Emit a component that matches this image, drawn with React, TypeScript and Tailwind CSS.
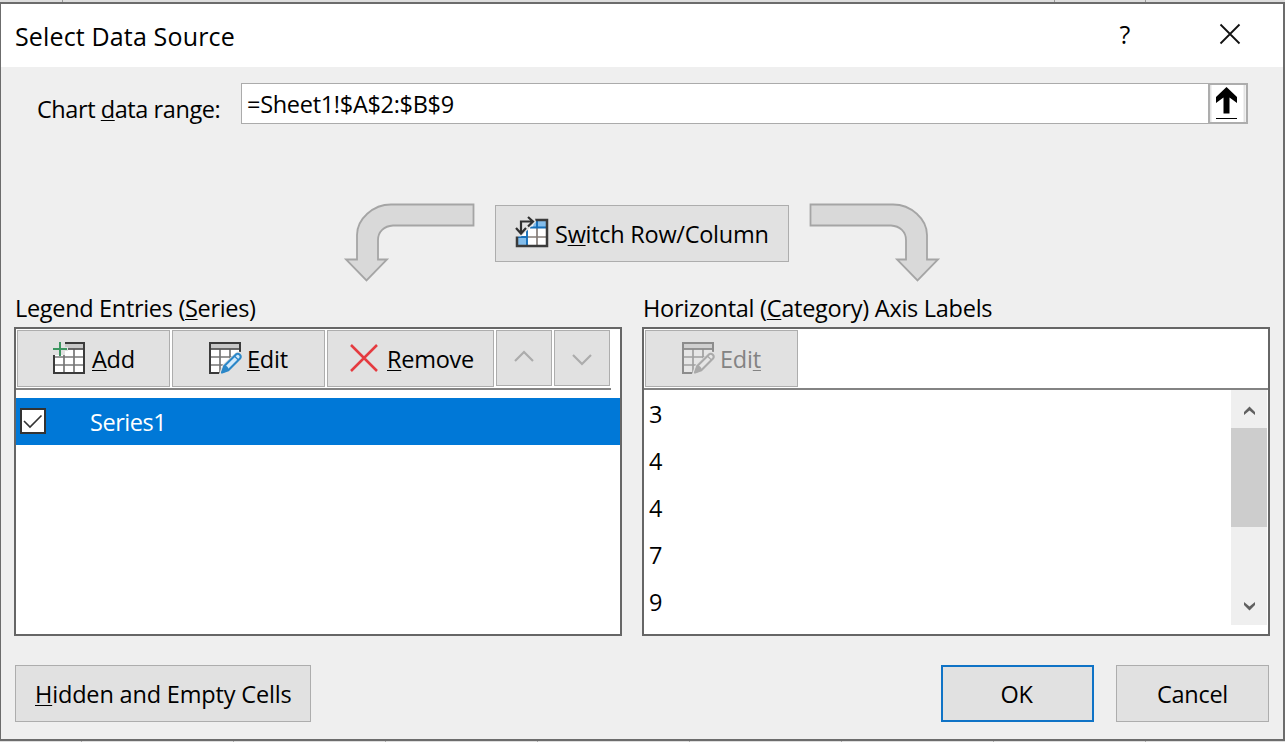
import type { ReactNode } from "react";

const items = ["3", "4", "4", "7", "9"];

function U({ children }: { children: ReactNode }) {
  return (
    <span className="underline decoration-1 underline-offset-[1.5px] [text-decoration-skip-ink:none]">
      {children}
    </span>
  );
}

function TableIcon({ variant }: { variant: "add" | "edit" | "disabled" }) {
  const off = variant === "disabled";
  const dark = off ? "#8c8c8c" : "#3b3b3b";
  const mid = off ? "#a0a0a0" : "#777777";
  return (
    <svg className="mb-px h-[34px] w-[34px] shrink-0" viewBox="0 0 34 34" fill="none">
      <rect x="2" y="2" width="30" height="30" fill={off ? "#e6e6e6" : "#fff"} />
      <rect x="2" y="2" width="30" height="6" fill={off ? "#d0d0d0" : "#c8c8c8"} />
      <path d="M1 16H32M1 24H32M12 8V32M22 8V32" stroke={mid} strokeWidth="1.7" />
      <path d="M1 8H32" stroke={off ? "#8c8c8c" : "#5a5a5a"} strokeWidth="1.8" />
      <rect x="2" y="2" width="30" height="30" stroke={dark} strokeWidth="2" />
      {variant === "add" ? (
        <>
          <path d="M0 0H13V6H16V10H13V14H0Z" fill="#e1e1e1" />
          <path d="M1 8H15M8 1V15" stroke="#3c9660" strokeWidth="2" />
        </>
      ) : (
        <>
          <path d="M33.5 11L29 10.5L15 23L10.5 34H34V11Z" fill="#e1e1e1" />
          <path
            d="M14 31.5L16.3 25L28 13.4Q30 12 31.8 13.8Q33.5 15.6 32 17.5L20.3 29.2Z"
            fill={off ? "#e6e6e6" : "#d5eafa"}
            stroke={off ? "#aaaaaa" : "#2b87c8"}
            strokeWidth="2.1"
            strokeLinejoin="round"
          />
          <path
            d="M16.3 25Q19.5 25.5 20.3 29.2L14 31.5ZM26.3 15L30.5 19"
            fill={off ? "#aaaaaa" : "#2b87c8"}
            stroke={off ? "#aaaaaa" : "#2b87c8"}
            strokeWidth="1.3"
          />
        </>
      )}
    </svg>
  );
}

function SwitchIcon() {
  return (
    <svg className="mb-[3px] h-[34px] w-[34px] shrink-0" viewBox="0 0 34 34" fill="none">
      <rect x="2" y="5" width="30" height="26" fill="#fff" />
      <path d="M19 5H32V12H18Z" fill="#83bdeb" />
      <path d="M2 21H12V31H2Z" fill="#83bdeb" />
      <path d="M12 22H32M22 12V31" stroke="#857d78" strokeWidth="1.7" />
      <path d="M15 12.5H31M12 15V30M22 5V13M3 22H12" stroke="#176fb8" strokeWidth="1.9" />
      <path d="M2 19V31H32V5H19" stroke="#3b3b3b" strokeWidth="2.5" />
      <path d="M0 0H19L21 7L6 21.5H0Z" fill="#e1e1e1" />
      <path d="M6 18V6.5H18M13 2L18 6.5L13 11.5M1 13L6 18.5L11 13" stroke="#303030" strokeWidth="2.2" />
    </svg>
  );
}

function BentArrow({ flip = false }: { flip?: boolean }) {
  return (
    <svg
      className={flip ? "h-[80px] w-[132px] shrink-0 -scale-x-100" : "h-[80px] w-[132px] shrink-0"}
      viewBox="0 0 132 80"
    >
      <path
        d="M130.5 2.5H48C30 2.5 14 17 14 33V57.5H3L23.5 78.5L44 57.5H35V38C35 30 41 24 50 23.5H130.5Z"
        fill="#d9d9d9"
        stroke="#a5a5a5"
        strokeWidth="1.8"
      />
    </svg>
  );
}

function Chevron({ down = false }: { down?: boolean }) {
  return (
    <svg className="h-[13px] w-[22px]" viewBox="0 0 22 13" fill="none">
      <path d={down ? "M2 2L11 11L20 2" : "M2 11L11 2L20 11"} stroke="#acacac" strokeWidth="2.2" />
    </svg>
  );
}

function ScrollChevron({ down = false }: { down?: boolean }) {
  return (
    <svg className="h-[10px] w-[13px]" viewBox="0 0 13 10">
      <path
        d={down ? "M1 1L6.5 5.5L12 1V4L6.5 9.5L1 4Z" : "M1 9L6.5 4.5L12 9V6L6.5 .5L1 6Z"}
        fill="#606060"
      />
    </svg>
  );
}

const btn = "flex h-[57px] shrink-0 items-center border border-[#adadad] bg-[#e1e1e1] whitespace-nowrap";

export default function App() {
  return (
    <div className="flex h-[742px] w-[1285px] flex-col overflow-hidden bg-[#dedede] font-['Open_Sans','Noto_Sans',sans-serif] text-[23.5px] leading-8 text-black">
      <div className="flex h-[2px] shrink-0">
        <div className="w-[63px] border-r border-[#999]" />
        <div className="w-[992px] border-r border-[#999]" />
        <div className="w-[91px] border-r border-[#999]" />
      </div>
      <div className="flex h-[739px] shrink-0 flex-col border-y-2 border-l border-r-2 border-[#6c6c6c] bg-[#efefef]">
        <header className="flex h-[63px] shrink-0 items-center bg-white">
          <h1 className="w-[1103px] pt-px pl-[14px] text-[25px] whitespace-nowrap tracking-[0.15px]">Select Data Source</h1>
          <button className="w-[42px] pb-[3px] text-center text-[25px]" aria-label="Help">?</button>
          <button className="ml-[73px] pb-[3px]" aria-label="Close">
            <svg className="h-[22px] w-[22px]" viewBox="0 0 22 22">
              <path d="M1.5 1.5L20.5 20.5M20.5 1.5L1.5 20.5" stroke="#111" strokeWidth="1.8" />
            </svg>
          </button>
        </header>

        <div className="mt-4 flex h-[41px] shrink-0">
          <label className="w-[240px] pt-[10px] pl-9 whitespace-nowrap tracking-[-0.43px]">
            Chart <U>d</U>ata range:
          </label>
          <div className="flex w-[968px] items-center border border-[#ababab] bg-white pl-[5px] tracking-[-0.3px]">
            =Sheet1!$A$2:$B$9
          </div>
          <button className="-ml-px flex w-10 items-center justify-center border-2 border-[#adadad] bg-white" aria-label="Collapse">
            <svg className="h-[37px] w-[36px] shrink-0" viewBox="0 0 36 37">
              <path d="M.5 0V37M34.5 0V37" stroke="#e3e3e3" strokeWidth="2" />
              <path d="M16.5 2L27 12V18L19.5 12.5V28.5H13.5V12.5L6 18V12Z" />
              <path d="M6 33.5H27" stroke="#000" />
            </svg>
          </button>
        </div>

        <div className="mt-[78px] flex h-[80px] shrink-0 items-start pl-[342px]">
          <BentArrow />
          <button className={`${btn} mt-[3px] ml-[20px] w-[294px] pl-[19px]`}>
            <SwitchIcon />
            <span className="ml-[6px] tracking-[-0.27px]">
              S<U>w</U>itch Row/Column
            </span>
          </button>
          <div className="ml-[20px]">
            <BentArrow flip />
          </div>
        </div>

        <main className="mt-[10px] flex shrink-0 gap-5 pl-[13px]">
          <section className="w-[608px]">
            <h2 className="h-[35px] pl-px whitespace-nowrap tracking-[-0.32px]">
              Legend Entries (<U>S</U>eries)
            </h2>
            <div className="h-[309px] border-2 border-[#666] bg-white">
              <div className="flex h-[61px] w-[595px] gap-[2px] border-b-2 border-[#838383] pt-px pl-px">
                <button className={`${btn} w-[153px] pl-[34px]`}>
                  <TableIcon variant="add" />
                  <span className="ml-[6px] pt-px tracking-[-0.3px]"><U>A</U>dd</span>
                </button>
                <button className={`${btn} w-[153px] pl-[35px]`}>
                  <TableIcon variant="edit" />
                  <span className="ml-[5px] pt-px tracking-[-0.2px]"><U>E</U>dit</span>
                </button>
                <button className={`${btn} w-[167px] pl-[22px]`}>
                  <svg className="mb-px h-7 w-7" viewBox="0 0 28 28">
                    <path d="M1 1L27 27M27 1L1 27" stroke="#e53b40" strokeWidth="2.5" />
                  </svg>
                  <span className="ml-[9px] pt-px tracking-[-0.25px]"><U>R</U>emove</span>
                </button>
                <button className="flex h-[56px] w-[56px] items-center justify-center border border-[#adadad] bg-[#e1e1e1] pb-1" aria-label="Move up">
                  <Chevron />
                </button>
                <button className="flex h-[56px] w-[56px] items-center justify-center border border-[#adadad] bg-[#e1e1e1] pt-[2px]" aria-label="Move down">
                  <Chevron down />
                </button>
              </div>
              <div className="mt-2 flex h-[47px] items-center bg-[#0078d7] pl-1 text-white">
                <span className="mb-[2px] flex h-[26px] w-[26px] items-center justify-center border-2 border-[#333] bg-white">
                  <svg className="h-[20px] w-[20px]" viewBox="0 0 20 20" fill="none">
                    <path d="M1 10L7 16L18.5 4.5" stroke="#333" strokeWidth="1.6" />
                  </svg>
                </span>
                <span className="ml-11 tracking-[-0.45px]">Series1</span>
              </div>
            </div>
          </section>

          <section className="w-[628px]">
            <h2 className="h-[35px] pl-px whitespace-nowrap tracking-[-0.27px]">
              Horizontal (<U>C</U>ategory) Axis Labels
            </h2>
            <div className="h-[309px] border-2 border-[#666] bg-white">
              <div className="h-[61px] border-b-2 border-[#838383] pt-px pl-px">
                <button className={`${btn} w-[153px] pl-[35px] text-[#838383]`}>
                  <TableIcon variant="disabled" />
                  <span className="ml-[5px] pt-px tracking-[-0.2px]">Edi<U>t</U></span>
                </button>
              </div>
              <div className="flex h-[235px] justify-between">
                <ul className="pl-[5px]">
                  {items.map((item, i) => (
                    <li key={i} className="flex h-[47px] items-center pt-px">{item}</li>
                  ))}
                </ul>
                <div className="mr-px flex w-9 flex-col bg-[#efefef]">
                  <div className="flex h-[38px] items-center justify-center pt-[3px]"><ScrollChevron /></div>
                  <div className="h-[99px] bg-[#cdcdcd]" />
                  <div className="flex flex-1 items-end justify-center pb-[14px]"><ScrollChevron down /></div>
                </div>
              </div>
            </div>
          </section>
        </main>

        <footer className="mt-[29px] flex shrink-0 pl-[14px]">
          <button className={`${btn} w-[296px] pt-px pl-[19px] tracking-[-0.17px]`}>
            <span><U>H</U>idden and Empty Cells</span>
          </button>
          <button className="ml-[630px] flex h-[57px] w-[153px] items-center justify-center border-2 border-[#0f73c6] bg-[#e1e1e1] pt-px pr-[2px] tracking-[-0.3px]">
            OK
          </button>
          <button className={`${btn} ml-[22px] w-[153px] justify-center pt-px tracking-[-0.3px]`}>Cancel</button>
        </footer>
      </div>
      <div className="flex h-px shrink-0">
        {Array.from({ length: 8 }, (_, i) => (
          <div key={i} className={i === 0 ? "w-[82px] border-r border-[#aaa]" : "w-[152px] border-r border-[#aaa]"} />
        ))}
      </div>
    </div>
  );
}
